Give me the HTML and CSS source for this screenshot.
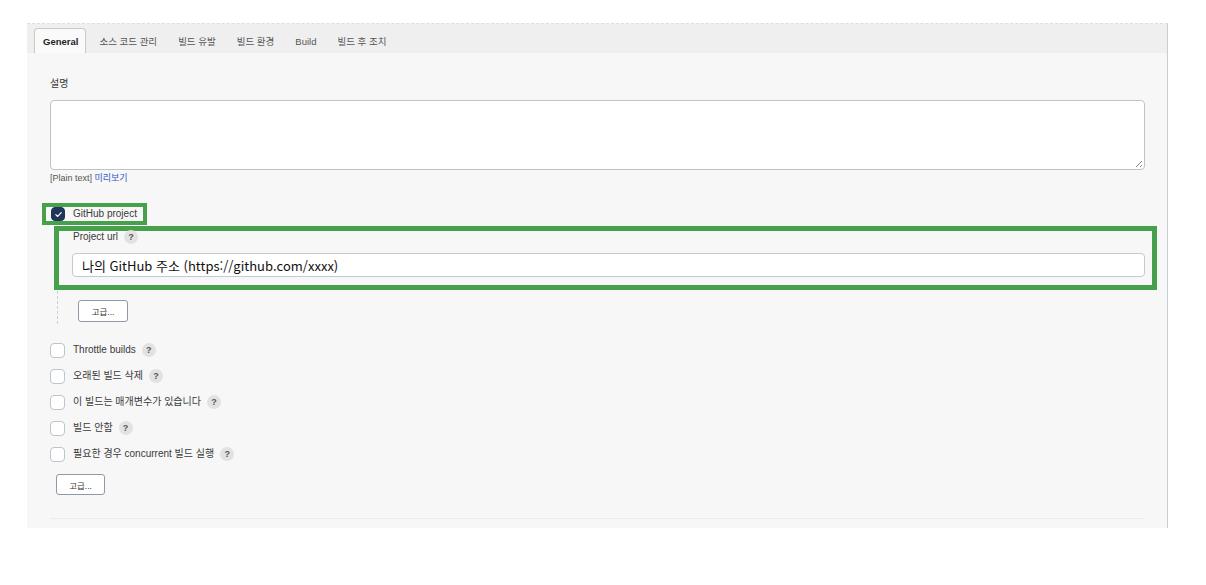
FILE: index.html
```html
<!DOCTYPE html>
<html lang="ko">
<head>
<meta charset="utf-8">
<link rel="stylesheet" href="styles.css">
</head>
<body>
<div class="panel">
  <div class="tabbar">
    <div class="tab active">General</div>
    <div class="tab">소스 코드 관리</div>
    <div class="tab">빌드 유발</div>
    <div class="tab">빌드 환경</div>
    <div class="tab">Build</div>
    <div class="tab">빌드 후 조치</div>
  </div>
  <div class="content">
    <div class="field-label">설명</div>
    <div class="textarea"><span class="grip"></span></div>
    <div class="hint">[Plain text] <a class="link">미리보기</a></div>

    <div class="green-check">
      <span class="cb checked"><svg viewBox="0 0 10 10" width="9" height="9"><path d="M2 5.2 L4.1 7.2 L8 2.8" fill="none" stroke="#fff" stroke-width="1.3" stroke-linecap="round" stroke-linejoin="round"/></svg></span>
      <span class="cb-label">GitHub project</span>
    </div>

    <div class="nested">
      <div class="green-url">
        <div class="url-label"><span>Project url</span><span class="help">?</span></div>
        <div class="input">나의 GitHub 주소 (https://github.com/xxxx)</div>
      </div>
      <div class="btn btn-inner">고급...</div>
    </div>

    <div class="rows">
      <div class="row"><span class="cb"></span><span class="cb-label">Throttle builds</span><span class="help">?</span></div>
      <div class="row"><span class="cb"></span><span class="cb-label">오래된 빌드 삭제</span><span class="help">?</span></div>
      <div class="row"><span class="cb"></span><span class="cb-label">이 빌드는 매개변수가 있습니다</span><span class="help">?</span></div>
      <div class="row"><span class="cb"></span><span class="cb-label">빌드 안함</span><span class="help">?</span></div>
      <div class="row"><span class="cb"></span><span class="cb-label">필요한 경우 concurrent 빌드 실행</span><span class="help">?</span></div>
    </div>
    <div class="btn btn-outer">고급...</div>
    <div class="divider"></div>
  </div>
</div>
</body>
</html>
```

FILE: styles.css
```css
* { box-sizing: border-box; }
html, body { margin: 0; padding: 0; background: #ffffff; }
body {
  font-family: "Liberation Sans", "Noto Sans CJK KR", Arial, sans-serif;
  color: #3a3a3a;
  font-size: 10px;
}
.panel {
  margin: 23px 0 0 27px;
  width: 1141px;
  background: #f7f7f7;
  border-top: 1px dashed #dedede;
  border-right: 1px solid #c6ced6;
}
.tabbar {
  height: 29px;
  background: #efefef;
  display: flex;
  align-items: flex-end;
  padding-left: 7px;
  gap: 3px;
}
.tab {
  height: 25px;
  display: flex;
  align-items: center;
  padding: 1px 9px 0 9px;
  font-size: 9.5px;
  color: #555;
}
.tab.active {
  background: #fafafa;
  border: 1px solid #c9c9c9;
  border-bottom: none;
  border-radius: 4px 4px 0 0;
  font-weight: bold;
  color: #222;
  padding: 1px 7px 0 8px;
  margin-right: 1px;
}
.content {
  padding: 25px 22px 9px 23px;
}
.field-label {
  line-height: 12px;
  height: 12px;
  font-size: 10px;
}
.textarea {
  margin-top: 10px;
  height: 70px;
  background: #fff;
  border: 1px solid #bcc3ca;
  border-radius: 4px;
  position: relative;
}
.grip {
  position: absolute;
  right: 2px;
  bottom: 2px;
  width: 6px;
  height: 6px;
  background: linear-gradient(135deg, transparent 45%, #888 45%, #888 55%, transparent 55%, transparent 75%, #888 75%, #888 85%, transparent 85%);
}
.hint {
  margin-top: 2px;
  line-height: 12px;
  font-size: 9px;
  color: #555;
}
.link { color: #2f56c8; }

.green-check {
  margin-top: 19px;
  margin-left: -8px;
  width: 105px;
  height: 22px;
  border: 4px solid #47a14c;
  display: flex;
  align-items: center;
  padding-left: 5px;
}
.cb {
  width: 15px;
  height: 15px;
  border: 1.5px solid #bcc4cc;
  border-radius: 4px;
  background: #fff;
  display: inline-flex;
  align-items: center;
  justify-content: center;
  flex: none;
}
.cb.checked {
  background: #20355a;
  border-color: #20355a;
  width: 14px;
  height: 14px;
}
.cb-label {
  margin-left: 8px;
  font-size: 10px;
  line-height: 12px;
}

.nested {
  margin-top: 1px;
  margin-left: 7px;
  border-left: 1px dashed #cfcfcf;
  padding-bottom: 2px;
}
.green-url {
  margin-left: -4px;
  margin-right: -12px;
  border: 5px solid #47a14c;
  padding: 0 7px 8px 13px;
}
.url-label {
  display: flex;
  align-items: center;
  height: 12px;
  line-height: 12px;
  padding-left: 1px;
}
.help {
  width: 14px;
  height: 14px;
  border-radius: 50%;
  background: #e2e2e2;
  color: #555;
  font-size: 9px;
  font-weight: bold;
  display: inline-flex;
  align-items: center;
  justify-content: center;
  margin-left: 6px;
  flex: none;
}
.input {
  margin-top: 10px;
  height: 24px;
  background: #fff;
  border: 1px solid #c5cad0;
  border-radius: 4px;
  font-family: "Noto Sans CJK KR", "Noto Sans", sans-serif;
  font-size: 13px;
  color: #111;
  display: flex;
  align-items: center;
  padding-left: 9px;
}
.btn {
  width: 50px;
  height: 22px;
  background: #fff;
  border: 1px solid #8f9aa6;
  border-radius: 3px;
  font-size: 8.5px;
  color: #333;
  display: flex;
  align-items: center;
  justify-content: center;
}
.btn-inner { margin-top: 10px; margin-left: 20px; }
.rows {
  margin-top: 13px;
  display: flex;
  flex-direction: column;
}
.row {
  height: 26px;
  display: flex;
  align-items: center;
}
.btn-outer { margin-top: 7px; margin-left: 6px; width: 49px; height: 21px; }
.divider {
  margin-top: 23px;
  height: 1px;
  background: #ebebeb;
}
```
